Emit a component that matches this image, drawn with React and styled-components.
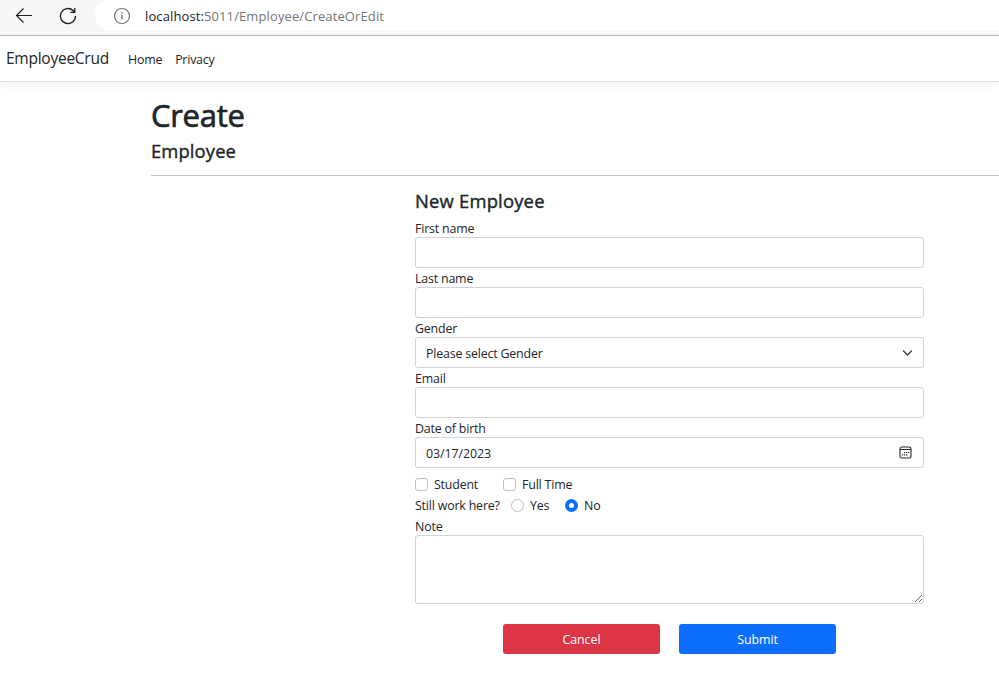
import React from 'react';
import styled, { createGlobalStyle } from 'styled-components';

const GlobalStyle = createGlobalStyle`
  *, *::before, *::after { box-sizing: border-box; }
  body {
    margin: 0;
    background: #fff;
    color: #212529;
    font: 400 12.4px/19px "Open Sans", "Noto Sans", sans-serif;
    letter-spacing: -0.18px;
    overflow: hidden;
  }
`;

const Page = styled.div`
  display: flex;
  flex-direction: column;
  height: 695px;
  overflow: hidden;
`;

const Toolbar = styled.div`
  display: flex;
  align-items: flex-start;
  flex: none;
  height: 36px;
  padding-left: 15px;
  background: #f7f7f7;
  border-bottom: 1px solid #b9b9b9;
`;

const ToolButton = styled.button`
  display: flex;
  flex: none;
  width: 18px;
  height: 18px;
  margin: 7px 26px 0 0;
  padding: 0;
  border: 0;
  background: none;
`;

const AddressBar = styled.div`
  display: flex;
  align-items: center;
  flex: 1;
  height: 31px;
  margin-left: -8px;
  padding-left: 18px;
  border-radius: 16px 0 0 16px;
  background: #fff;
`;

const Url = styled.span`
  margin-left: 14px;
  padding-top: 2px;
  color: #767676;
  font-size: 13px;
  letter-spacing: 0.11px;
`;

const Host = styled.span`
  color: #1b1b1b;
`;

const Navbar = styled.nav`
  display: flex;
  align-items: center;
  flex: none;
  height: 46px;
  padding-left: 6px;
  background: #fff;
  border-bottom: 1px solid #dee2e6;
  box-shadow: 0 3px 10px rgba(0, 0, 0, 0.05);
`;

const Brand = styled.a`
  width: 122px;
  font-size: 15.5px;
  letter-spacing: -0.25px;
`;

const NavLink = styled.a`
  margin-right: 13px;
  padding-top: 1px;
  letter-spacing: -0.22px;
`;

const Main = styled.main`
  margin-left: 151px;
  padding-top: 14px;
`;

const Title = styled.h1`
  margin: 0;
  font-size: 31px;
  font-weight: 500;
  line-height: 38px;
  letter-spacing: -0.3px;
  -webkit-text-stroke: 0.7px currentColor;
`;

const Subtitle = styled.h4`
  margin: 0;
  font-size: 18.4px;
  font-weight: 500;
  line-height: 23px;
  letter-spacing: 0.2px;
  -webkit-text-stroke: 0.4px currentColor;
`;

const PageSubtitle = styled(Subtitle)`
  margin-top: 5px;
  letter-spacing: 0.12px;
`;

const Divider = styled.hr`
  height: 1px;
  margin: 13px 0 13px;
  border: 0;
  background: #c3c4c5;
`;

const Form = styled.form`
  width: 509px;
  margin-left: 264px;
`;

const FormTitle = styled(Subtitle)`
  margin-bottom: 6px;
`;

const Field = styled.label`
  display: block;
`;

const Caption = styled.span`
  display: block;
  height: 19px;
  line-height: 22px;
`;

const Control = styled.div`
  display: flex;
  align-items: center;
  height: 31px;
  padding-right: ${(p) => p.$inset || 10}px;
  border: 1px solid #ced4da;
  border-radius: 3px;
`;

const Input = styled.input`
  flex: 1;
  height: 29px;
  padding: 1px 10px 0;
  border: 0;
  outline: 0;
  background: none;
  color: inherit;
  font: inherit;
  letter-spacing: ${(p) => (p.$numeric ? '-0.08px' : 'inherit')};
`;

const Select = styled.select`
  flex: 1;
  height: 29px;
  padding: 1px 10px 0;
  border: 0;
  outline: 0;
  appearance: none;
  background: none;
  color: inherit;
  font: inherit;
  letter-spacing: inherit;
`;

const OptionRow = styled.div`
  display: flex;
  align-items: center;
  height: 21px;
  margin-top: ${(p) => p.$top || 0}px;
`;

const Question = styled.span`
  width: 96px;
`;

const Option = styled.label`
  display: flex;
  align-items: center;
  width: ${(p) => p.$width}px;
`;

const Mark = styled.input`
  appearance: none;
  flex: none;
  width: 13px;
  height: 13px;
  margin: 0 6px 1px 0;
  border: 1px solid #bfbfbf;
  border-radius: ${(p) => (p.type === 'radio' ? '50%' : '3px')};
  background: #fff;

  &:checked {
    border: 4px solid #0d6efd;
  }
`;

const TextArea = styled.textarea`
  display: block;
  width: 100%;
  height: 69px;
  padding: 5px 10px;
  border: 1px solid #ced4da;
  border-radius: 3px;
  outline: 0;
  resize: vertical;
  font: inherit;
`;

const Actions = styled.div`
  display: flex;
  gap: 19px;
  margin: 20px 0 0 88px;
`;

const Button = styled.button`
  width: 157px;
  height: 30px;
  padding: 0;
  border: 0;
  border-radius: 3px;
  background: ${(p) => (p.$danger ? '#dc3545' : '#0d6efd')};
  color: #fff;
  font: inherit;
  letter-spacing: -0.05px;
`;

const BackIcon = () => (
  <svg width="18" height="18" viewBox="0 0 18 18" fill="none" stroke="#1f1f1f" strokeWidth="1.2">
    <path d="M17 8.5H1.5M8.5 1.5l-7 7 7 7" />
  </svg>
);

const ReloadIcon = () => (
  <svg width="18" height="18" viewBox="0 0 18 18" fill="none" stroke="#1f1f1f" strokeWidth="1.3">
    <path d="M16.5 9a7.5 7.5 0 1 1-2.2-5.3l1.5 1.5M15.8 1v4.4h-4.4" />
  </svg>
);

const InfoIcon = () => (
  <svg width="18" height="18" viewBox="0 0 18 18" fill="none" stroke="#757575" strokeWidth="1.2">
    <circle cx="9" cy="9" r="7.5" />
    <path d="M9 7.8v4.8M9 5v1.5" strokeWidth="1.4" />
  </svg>
);

const ChevronIcon = () => (
  <svg width="11" height="11" viewBox="0 0 11 11" fill="none" stroke="#343a40" strokeWidth="1.4" strokeLinecap="round" strokeLinejoin="round">
    <path d="M1.5 4l4 4 4-4" />
  </svg>
);

const CalendarIcon = () => (
  <svg width="13" height="13" viewBox="0 0 13 13" fill="none" stroke="#212529">
    <rect x="1" y="1" width="11" height="11" rx="1.8" strokeWidth="1.1" />
    <path d="M1 3.5h11" />
    <path d="M5 6.5h1.2M7 6.5h1.2M9 6.5h1.2M3 8.8h1.2M5 8.8h1.2M7 8.8h1.2" strokeWidth="1.2" />
  </svg>
);

export default function App() {
  return (
    <Page>
      <GlobalStyle />
      <Toolbar>
        <ToolButton aria-label="Back"><BackIcon /></ToolButton>
        <ToolButton aria-label="Refresh"><ReloadIcon /></ToolButton>
        <AddressBar>
          <InfoIcon />
          <Url><Host>localhost:</Host>5011/Employee/CreateOrEdit</Url>
        </AddressBar>
      </Toolbar>
      <Navbar>
        <Brand>EmployeeCrud</Brand>
        <NavLink>Home</NavLink>
        <NavLink>Privacy</NavLink>
      </Navbar>
      <Main>
        <Title>Create</Title>
        <PageSubtitle>Employee</PageSubtitle>
        <Divider />
        <Form>
          <FormTitle>New Employee</FormTitle>
          <Field><Caption>First name</Caption><Control><Input /></Control></Field>
          <Field><Caption>Last name</Caption><Control><Input /></Control></Field>
          <Field>
            <Caption>Gender</Caption>
            <Control>
              <Select><option>Please select Gender</option></Select>
              <ChevronIcon />
            </Control>
          </Field>
          <Field><Caption>Email</Caption><Control><Input /></Control></Field>
          <Field>
            <Caption>Date of birth</Caption>
            <Control $inset={11}>
              <Input $numeric defaultValue="03/17/2023" />
              <CalendarIcon />
            </Control>
          </Field>
          <OptionRow $top={6}>
            <Option $width={88}><Mark type="checkbox" />Student</Option>
            <Option $width={90}><Mark type="checkbox" />Full Time</Option>
          </OptionRow>
          <OptionRow>
            <Question>Still work here?</Question>
            <Option $width={54}><Mark type="radio" name="working" />Yes</Option>
            <Option $width={50}><Mark type="radio" name="working" defaultChecked />No</Option>
          </OptionRow>
          <Field><Caption>Note</Caption><TextArea /></Field>
          <Actions>
            <Button type="button" $danger>Cancel</Button>
            <Button type="button">Submit</Button>
          </Actions>
        </Form>
      </Main>
    </Page>
  );
}
